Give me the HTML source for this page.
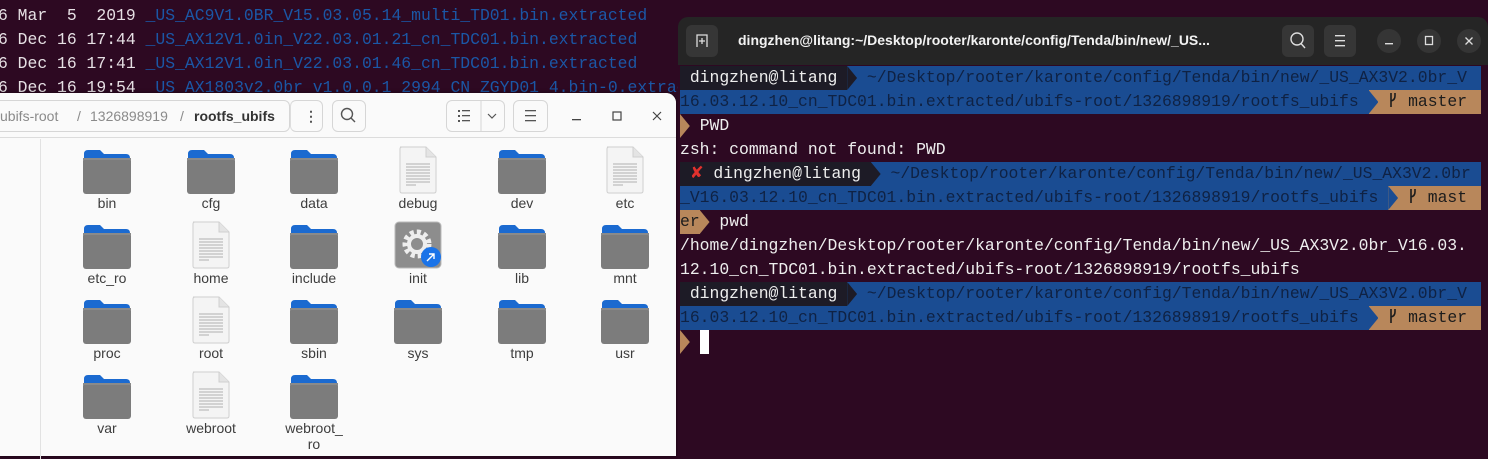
<!DOCTYPE html>
<html><head><meta charset="utf-8"><style>
*{margin:0;padding:0;box-sizing:border-box}
body{width:1488px;height:456px;overflow:hidden;background:#2d0922;position:relative;font-family:"Liberation Sans",sans-serif}
.bg{position:absolute;left:-2px;top:4px;font-family:"Liberation Mono",monospace;font-size:16.4px;line-height:24px;color:#e6e0e4;white-space:pre}
.bg b{font-weight:normal;color:#1b57a6}
.fm{position:absolute;left:0;top:93px;width:676px;height:363px;background:#fafafa;border-top-right-radius:10px;box-shadow:0 0 4px rgba(0,0,0,.5)}
.hdr{position:absolute;left:0;top:0;width:676px;height:45px;border-bottom:1px solid #dcdcdc;border-top-right-radius:10px;background:#fafafa}
.btn{position:absolute;top:7px;height:32px;border:1px solid #d6d6d6;border-radius:6px;background:#fafafa}
.crumb{position:absolute;top:15px;font-size:14px;color:#8a8a8a}
.side{position:absolute;left:40px;top:46px;width:1px;height:320px;background:#e2e2e2}
.ic{position:absolute;width:100px;text-align:center}
.ic svg{display:block;margin:0 auto}
.lb{position:absolute;width:100px;text-align:center;font-size:14px;color:#3d3d3d;line-height:16px}
.term{position:absolute;left:678px;top:17px;width:810px;height:439px;background:#2d0922;border-radius:10px 10px 0 0;overflow:hidden}
.th{position:absolute;left:0;top:0;width:810px;height:48px;background:#252525}
.tb{position:absolute;top:8px;width:32px;height:32px;border-radius:6px;background:#363636}
.tc{position:absolute;top:12px;width:24px;height:24px;border-radius:12px;background:#353535}
.rows{position:absolute;left:2px;top:49px;font-family:"Liberation Mono",monospace;font-size:16.4px;line-height:24px;color:#eee;white-space:pre}
.r{height:24px;display:flex}
.r span{display:inline-block;height:24px}
.d{background:#1d1b26;color:#eee}
.bl{background:#1a4c92;color:#0f2244}
.or{background:#b8875b;color:#1c1c1c}
.ar{width:9.87px;clip-path:polygon(0 0,100% 50%,0 100%)}
</style></head><body>
<div class="bg">6 Mar  5  2019 <b>_US_AC9V1.0BR_V15.03.05.14_multi_TD01.bin.extracted</b>
6 Dec 16 17:44 <b>_US_AX12V1.0in_V22.03.01.21_cn_TDC01.bin.extracted</b>
6 Dec 16 17:41 <b>_US_AX12V1.0in_V22.03.01.46_cn_TDC01.bin.extracted</b>
6 Dec 16 19:54 <b>_US_AX1803v2.0br_v1.0.0.1_2994_CN_ZGYD01_4.bin-0.extracted</b></div>

<div class="fm">
<div class="hdr">
<div class="btn" style="left:-10px;width:300px"></div>
<span class="crumb" style="left:0">ubifs-root</span>
<span class="crumb" style="left:77px">/</span>
<span class="crumb" style="left:90px">1326898919</span>
<span class="crumb" style="left:180px">/</span>
<span class="crumb" style="left:194px;color:#333;font-weight:bold">rootfs_ubifs</span>
<div class="btn" style="left:290px;width:33px;border-left:1px solid #ddd"></div>
<span class="crumb" style="left:304px;color:#555;font-weight:bold">⋮</span>
<div class="btn" style="left:332px;width:34px"><svg width="32" height="30"><circle cx="14" cy="13" r="5.5" fill="none" stroke="#555" stroke-width="1.4"/><line x1="18" y1="17" x2="22" y2="21" stroke="#555" stroke-width="1.4"/></svg></div>
<div class="btn" style="left:446px;width:59px"><svg width="57" height="30"><g fill="#555"><rect x="11" y="9" width="2" height="2"/><rect x="11" y="14" width="2" height="2"/><rect x="11" y="19" width="2" height="2"/><rect x="15" y="9" width="8" height="1.3"/><rect x="15" y="14" width="8" height="1.3"/><rect x="15" y="19" width="8" height="1.3"/></g><line x1="34" y1="0" x2="34" y2="30" stroke="#d6d6d6"/><polyline points="41,13 45,17 49,13" fill="none" stroke="#555" stroke-width="1.2"/></svg></div>
<div class="btn" style="left:513px;width:35px"><svg width="33" height="30"><g fill="#555"><rect x="11" y="9" width="11" height="1.3"/><rect x="11" y="14" width="11" height="1.3"/><rect x="11" y="19" width="11" height="1.3"/></g></svg></div>
<svg style="position:absolute;left:568px;top:12px" width="100" height="24"><rect x="4" y="14" width="9" height="1.3" fill="#444"/><rect x="45" y="7" width="8" height="8" fill="none" stroke="#444" stroke-width="1.2"/><path d="M85 7l8 8M93 7l-8 8" stroke="#444" stroke-width="1.2"/></svg>
</div>
<div class="side"></div>
</div>

<div id="grid"></div>

<div class="term">
<div class="th">
<div class="tb" style="left:8px"><svg width="32" height="32"><path d="M11 22V10h10v12" fill="none" stroke="#ddd" stroke-width="1.3"/><path d="M16 13v6M13 16h6" stroke="#ddd" stroke-width="1.3"/></svg></div>
<div style="position:absolute;left:60px;top:15px;color:#f2f2f2;font-weight:bold;font-size:14px">dingzhen@litang:~/Desktop/rooter/karonte/config/Tenda/bin/new/_US...</div>
<div class="tb" style="left:604px"><svg width="32" height="32"><circle cx="15" cy="14" r="6" fill="none" stroke="#ddd" stroke-width="1.4"/><line x1="19" y1="18.5" x2="23" y2="23" stroke="#ddd" stroke-width="1.4"/></svg></div>
<div class="tb" style="left:646px"><svg width="32" height="32"><g fill="#ddd"><rect x="11" y="10" width="10" height="1.4"/><rect x="11" y="15" width="10" height="1.4"/><rect x="11" y="20" width="10" height="1.4"/></g></svg></div>
<div class="tc" style="left:699px"><svg width="24" height="24"><rect x="8" y="14" width="8" height="1.4" fill="#ddd"/></svg></div>
<div class="tc" style="left:739px"><svg width="24" height="24"><rect x="8.5" y="7.5" width="7" height="8" fill="none" stroke="#ddd" stroke-width="1.3"/></svg></div>
<div class="tc" style="left:779px"><svg width="24" height="24"><path d="M8.5 8.5l7 7M15.5 8.5l-7 7" stroke="#ddd" stroke-width="1.3"/></svg></div>
</div>
<div class="rows" id="rows"></div>
</div>

<script>
var F='<svg width="50" height="46" viewBox="0 0 50 46"><path d="M2 5q0-4 4-4h12l4 4h22q4 0 4 4v6H2z" fill="#1b6ad0"/><rect x="1" y="9" width="48" height="36" rx="3" fill="#7c7c7c"/><rect x="1" y="9" width="48" height="2" fill="#8a8a8a"/></svg>';
var D='<svg width="50" height="48" viewBox="0 0 50 48"><path d="M7 1h26l10 10v34q0 2-2 2H9q-2 0-2-2V3q0-2 2-2z" fill="#f4f4f4" stroke="#cfcfcf"/><path d="M33 1v10h10" fill="#e4e4e4" stroke="#cfcfcf"/><g stroke="#999" stroke-width="0.8"><path d="M13 18h24M13 21h24M13 24h24M13 27h24M13 30h24M13 33h24M13 36h24M13 39h10"/></g></svg>';
var X='<svg width="50" height="48" viewBox="0 0 50 48"><rect x="2" y="1" width="46" height="46" rx="4" fill="#8d8d8d" stroke="#bbb"/><circle cx="24" cy="23" r="12" fill="none" stroke="#eee" stroke-width="5" stroke-dasharray="4 3"/><circle cx="24" cy="23" r="8" fill="none" stroke="#eee" stroke-width="4"/><circle cx="38" cy="36" r="10" fill="#1a73e8"/><path d="M34 40l7-7M36 33h5v5" stroke="#fff" stroke-width="1.4" fill="none"/></svg>';
var items=[["bin",F],["cfg",F],["data",F],["debug",D],["dev",F],["etc",D],["etc_ro",F],["home",D],["include",F],["init",X],["lib",F],["mnt",F],["proc",F],["root",D],["sbin",F],["sys",F],["tmp",F],["usr",F],["var",F],["webroot",D],["webroot_<br>ro",F]];
var cx=[107,211,314,418,522,625],h='';
items.forEach(function(it,i){var c=i%6,r=Math.floor(i/6);var isF=it[1]==F;
h+='<div class="ic" style="left:'+(cx[c]-50)+'px;top:'+(r*75+(isF?149:146))+'px">'+it[1]+'</div>';
h+='<div class="lb" style="left:'+(cx[c]-50)+'px;top:'+(195+r*75)+'px">'+it[0]+'</div>';});
document.getElementById('grid').innerHTML=h;
var A=function(from,to){return '<span class="'+to+'" style="width:9.87px;position:relative"><span class="'+from+' ar" style="position:absolute;left:0;top:0"></span></span>'};
var G='<svg width="10" height="16" style="vertical-align:-2px"><path d="M3 1v14M3 9q4-1 4-5V1" stroke="#1c1c1c" stroke-width="1.6" fill="none"/></svg>';
var P1='~/Desktop/rooter/karonte/config/Tenda/bin/new/_US_AX3V2.0br_V',P2='16.03.12.10_cn_TDC01.bin.extracted/ubifs-root/1326898919/rootfs_ubifs ';
var R=[
'<span class="d"> dingzhen@litang </span>'+A('d','bl')+'<span class="bl" style="flex:1"> '+P1+'</span>',
'<span class="bl">'+P2+'</span>'+A('bl','or')+'<span class="or" style="flex:1"> '+G+' master</span>',
'<span class="or ar"></span><span> PWD</span>',
'<span>zsh: command not found: PWD</span>',
'<span class="d"> <span style="color:#e0312d">✘</span> dingzhen@litang </span>'+A('d','bl')+'<span class="bl" style="flex:1"> ~/Desktop/rooter/karonte/config/Tenda/bin/new/_US_AX3V2.0br</span>',
'<span class="bl">_V'+P2+'</span>'+A('bl','or')+'<span class="or" style="flex:1"> '+G+' mast</span>',
'<span class="or">er</span><span class="ar or"></span><span> pwd</span>',
'<span>/home/dingzhen/Desktop/rooter/karonte/config/Tenda/bin/new/_US_AX3V2.0br_V16.03.</span>',
'<span>12.10_cn_TDC01.bin.extracted/ubifs-root/1326898919/rootfs_ubifs</span>',
'<span class="d"> dingzhen@litang </span>'+A('d','bl')+'<span class="bl" style="flex:1"> '+P1+'</span>',
'<span class="bl">'+P2+'</span>'+A('bl','or')+'<span class="or" style="flex:1"> '+G+' master</span>',
'<span class="or ar"></span><span> </span><span style="background:#fff;width:9px;height:24px"></span>'];
document.getElementById('rows').innerHTML=R.map(function(x){return '<div class="r" style="width:801px">'+x+'</div>'}).join('');
</script>
</body></html>
